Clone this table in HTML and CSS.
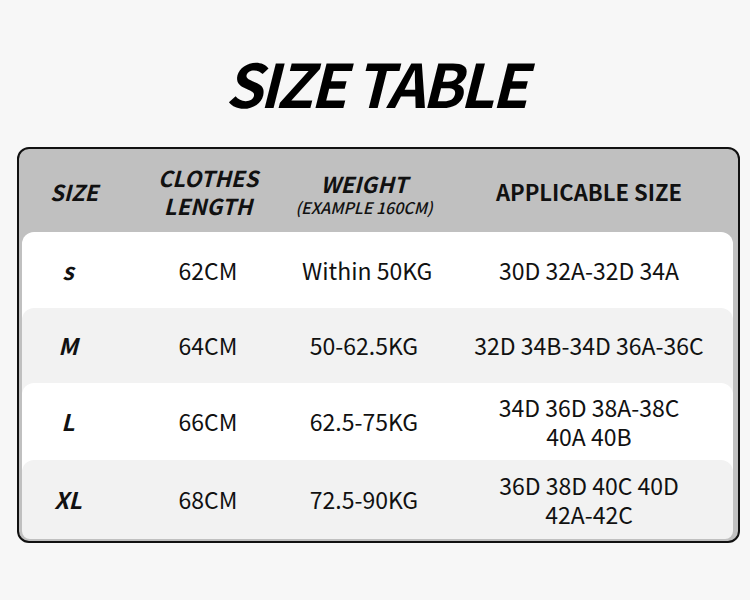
FILE: index.html
```html
<!DOCTYPE html>
<html>
<head>
<meta charset="utf-8">
<link rel="stylesheet" href="styles.css">
</head>
<body>
<div class="title-wrap"><h1 class="title">SIZE TABLE</h1></div>
<div class="table">
  <div class="head">
    <div class="c1 h-size">SIZE</div>
    <div class="c2">CLOTHES<br>LENGTH</div>
    <div class="c3"><span>WEIGHT</span><span class="sub">(EXAMPLE 160CM)</span></div>
    <div class="c4 upright">APPLICABLE SIZE</div>
  </div>
  <div class="row r1 white">
    <div class="c1 sz">s</div>
    <div class="c2">62CM</div>
    <div class="c3">Within 50KG</div>
    <div class="c4">30D 32A-32D 34A</div>
  </div>
  <div class="row r2 grey">
    <div class="c1 sz">M</div>
    <div class="c2">64CM</div>
    <div class="c3">50-62.5KG</div>
    <div class="c4">32D 34B-34D 36A-36C</div>
  </div>
  <div class="row r3 white">
    <div class="c1 sz">L</div>
    <div class="c2">66CM</div>
    <div class="c3">62.5-75KG</div>
    <div class="c4">34D 36D 38A-38C<br>40A 40B</div>
  </div>
  <div class="row r4 grey last">
    <div class="c1 sz">XL</div>
    <div class="c2">68CM</div>
    <div class="c3">72.5-90KG</div>
    <div class="c4">36D 38D 40C 40D<br>42A-42C</div>
  </div>
</div>
</body>
</html>
```
FILE: styles.css
```css
html, body {
  margin: 0;
  padding: 0;
  background: #f7f7f7;
  width: 750px;
  height: 600px;
  overflow: hidden;
}
body {
  font-family: "Noto Sans CJK SC", "Noto Sans", sans-serif;
  color: #111;
}
.title-wrap {
  height: 147px;
  display: flex;
  justify-content: center;
  align-items: center;
}
.title {
  margin: 0;
  font-family: "Noto Sans CJK SC", sans-serif;
  font-weight: 700;
  font-style: italic;
  font-size: 60px;
  line-height: 1;
  letter-spacing: -3px;
  color: #000;
  padding-top: 16px;
}
.table {
  margin-left: 17px;
  width: 723px;
  box-sizing: border-box;
  border: 2px solid #111;
  border-radius: 12px;
  background: #c0c0c0;
  padding: 0 5px 2px 3px;
}
.head, .row {
  display: grid;
  grid-template-columns: 92px 188px 124px 1fr;
  align-items: center;
  text-align: center;
  white-space: nowrap;
}
.c4 { padding-left: 19px; }
.head {
  height: 83px;
  font-weight: 700;
  font-style: italic;
  font-size: 22px;
  line-height: 28px;
}
.head .h-size { padding-left: 12px; }
.head .c3 { display: flex; flex-direction: column; align-items: center; padding-top: 4px; }
.head .sub { font-size: 16px; line-height: 20px; font-weight: 500; }
.head .upright { font-style: normal; }
.row {
  box-sizing: border-box;
  border-radius: 12px 12px 0 0;
  padding-bottom: 12px;
  margin-bottom: -12px;
  font-size: 23px;
  line-height: 29px;
}
.row.white { background: #fff; }
.row.grey { background: #f2f2f2; }
.r1 { height: 88px; }
.r2 { height: 87px; }
.r3 { height: 89px; }
.r4 {
  height: 79px;
  padding-bottom: 0;
  margin-bottom: 0;
  border-radius: 12px 12px 8px 8px;
}
.sz {
  font-weight: 700;
  font-style: italic;
  font-size: 23px;
}
```
